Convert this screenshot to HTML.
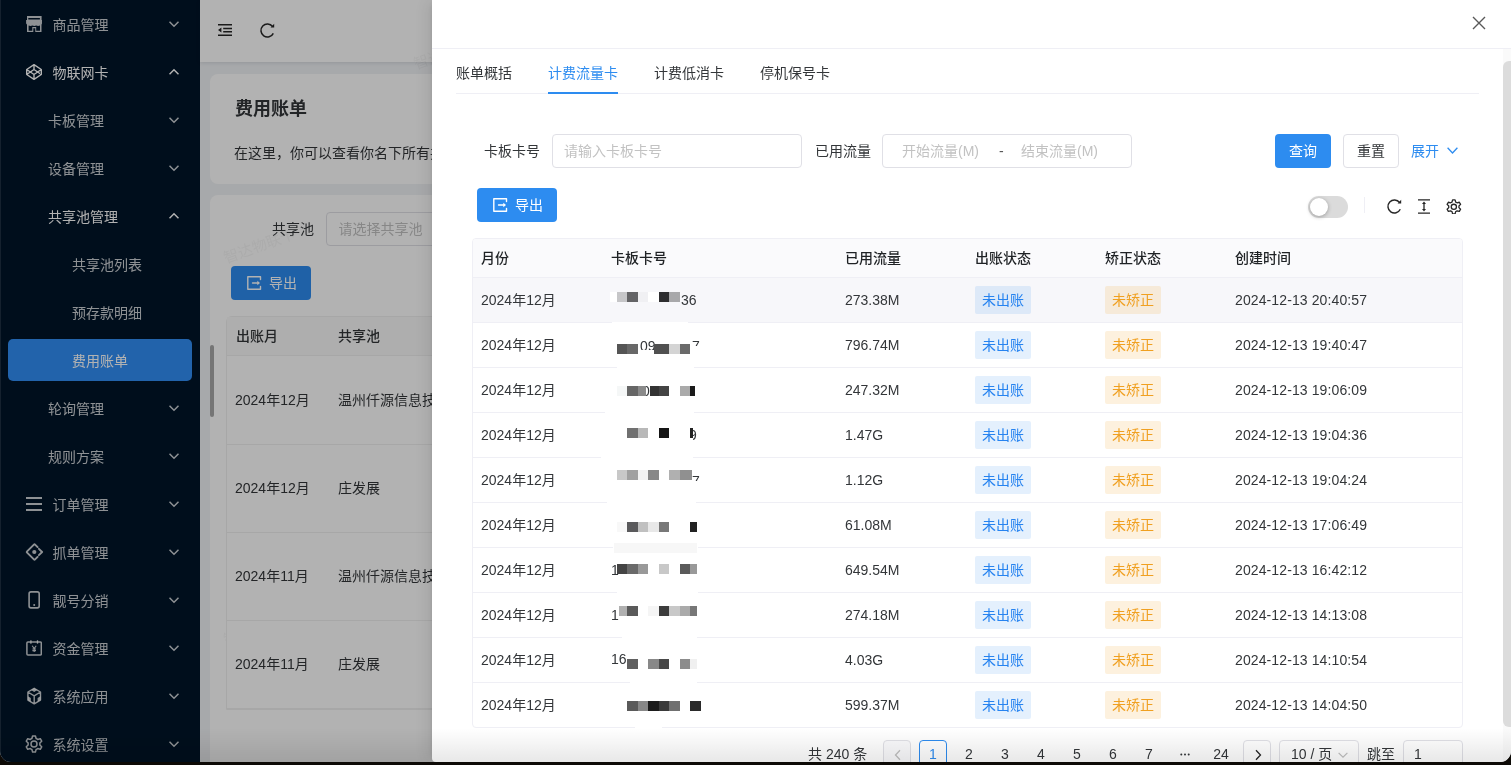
<!DOCTYPE html>
<html lang="zh-CN">
<head>
<meta charset="utf-8">
<title>费用账单</title>
<style>
*{box-sizing:border-box;margin:0;padding:0}
html,body{width:1511px;height:765px;overflow:hidden;background:#0d0a06}
body{font-family:"Liberation Sans","Noto Sans CJK SC",sans-serif;font-size:14px;color:#333639;position:relative}
.abs{position:absolute}
#win{will-change:transform;position:absolute;left:0;top:0;width:1511px;height:762px;overflow:hidden;border-radius:0 0 11px 11px;background:#f0f2f5}
/* ---------- sidebar ---------- */
#side{position:absolute;left:0;top:0;width:200px;height:762px;background:#001529}
.mi{position:absolute;left:0;width:200px;height:40px;line-height:40px;color:rgba(255,255,255,.8);font-size:14px;white-space:nowrap}
.mi .tx{position:absolute;top:1px}
.mi svg.ic{position:absolute;left:26px;top:12px;width:16px;height:16px;fill:currentColor}
.mi svg.ar{position:absolute;left:169px;top:15px;width:10px;height:10px;fill:none;stroke:currentColor;stroke-width:1.5}
.mi.sel{left:8px;width:184px;background:#318ef5;border-radius:5px;color:#fff;height:42px;line-height:42px;margin-top:-1px}
/* ---------- page behind ---------- */
#hdr{position:absolute;left:200px;top:0;width:1311px;height:62px;background:#fff;box-shadow:0 1px 4px rgba(0,21,41,.12)}
.card{position:absolute;background:#fff;border-radius:8px}
.bt{position:absolute;white-space:nowrap;line-height:20px}
/* ---------- mask & drawer ---------- */
#mask{position:absolute;left:0;top:0;width:1511px;height:762px;background:rgba(0,0,0,.3)}
#drawer{position:absolute;left:432px;top:0;width:1079px;height:762px;background:#fff;border-radius:0 0 0 4px;box-shadow:-6px 0 16px 0 rgba(0,0,0,.08),-3px 0 6px -4px rgba(0,0,0,.12)}
#drawer .t{position:absolute;white-space:nowrap;line-height:22px;height:22px}
.btn{position:absolute;height:34px;border-radius:4px;line-height:34px;text-align:center;font-size:14px;white-space:nowrap}
.btn.pr{background:#2d8cf0;color:#fff}
.btn.df{background:#fff;border:1px solid #e0e0e6;line-height:32px}
.inp{position:absolute;height:34px;border:1px solid #e0e0e6;border-radius:4px;background:#fff}
.ph{color:#c2c2c2}
.row{position:absolute;left:1px;width:989px;height:45px;border-bottom:1px solid #efeff5}
.row .c{position:absolute;top:11px;line-height:22px;white-space:nowrap}
.tag{position:absolute;top:8px;height:28px;line-height:28px;width:56px;text-align:center;border-radius:2px;font-size:14px}
.tag.b{left:502px;background:rgba(32,128,240,.12);color:#2683f0}
.tag.o{left:632px;background:rgba(240,160,32,.15);color:#f0a020}
.mz{position:absolute;height:10px}
.pg{position:absolute;top:740px;height:28px;line-height:28px;text-align:center;font-size:14px;white-space:nowrap}
</style>
</head>
<body>
<div id="win">
<div id="side">
<div class="mi" style="top:4px"><svg class="ic" viewBox="0 0 16 16"><path fill-rule="evenodd" d="M1 0h14.600v4h.4v3.200a2 2 0 0 1-.5 1.300V16H1V8.500A2 2 0 0 1 .1 7.200V4H1zM2.300 2.100h11.600v1.300H2.300zM2.600 9.500Q4.500 10.300 6.400 9.500Q8.300 10.300 10.200 9.500Q12.100 10.300 14 9.500V14.700H10.200V11H6.300V14.700H2.600zM7.300 12.200h2V16h-2z"/></svg><span class="tx" style="left:52.5px">商品管理</span><svg class="ar" viewBox="0 0 10 10"><path d="M.5 2.800L5 7.300 9.500 2.800"/></svg></div>
<div class="mi" style="top:52px;color:#fff"><svg class="ic" viewBox="0 0 16 16" style="fill:none;stroke:currentColor;stroke-width:1.4;stroke-linejoin:round"><path d="M8 .7L15.300 5.500v5L8 15.300 .7 10.500v-5zM8 .7v4.800M8 15.300v-4.800M.7 5.500L8 10.500l7.300-5M.7 10.500L8 5.500l7.300 5"/></svg><span class="tx" style="left:52.5px">物联网卡</span><svg class="ar" viewBox="0 0 10 10"><path d="M.5 7.200L5 2.700 9.500 7.200"/></svg></div>
<div class="mi" style="top:100px"><span class="tx" style="left:48px">卡板管理</span><svg class="ar" viewBox="0 0 10 10"><path d="M.5 2.800L5 7.300 9.500 2.800"/></svg></div>
<div class="mi" style="top:148px"><span class="tx" style="left:48px">设备管理</span><svg class="ar" viewBox="0 0 10 10"><path d="M.5 2.800L5 7.300 9.500 2.800"/></svg></div>
<div class="mi" style="top:196px;color:#fff"><span class="tx" style="left:48px">共享池管理</span><svg class="ar" viewBox="0 0 10 10"><path d="M.5 7.200L5 2.700 9.500 7.200"/></svg></div>
<div class="mi" style="top:244px"><span class="tx" style="left:72px">共享池列表</span></div>
<div class="mi" style="top:292px"><span class="tx" style="left:72px">预存款明细</span></div>
<div class="mi sel" style="top:340px"><span class="tx" style="left:64px">费用账单</span></div>
<div class="mi" style="top:388px"><span class="tx" style="left:48px">轮询管理</span><svg class="ar" viewBox="0 0 10 10"><path d="M.5 2.800L5 7.300 9.500 2.800"/></svg></div>
<div class="mi" style="top:436px"><span class="tx" style="left:48px">规则方案</span><svg class="ar" viewBox="0 0 10 10"><path d="M.5 2.800L5 7.300 9.500 2.800"/></svg></div>
<div class="mi" style="top:484px"><svg class="ic" viewBox="0 0 16 16"><path d="M0 1h16v2H0zM0 7h16v2H0zM0 13h16v2H0z"/></svg><span class="tx" style="left:52.5px">订单管理</span><svg class="ar" viewBox="0 0 10 10"><path d="M.5 2.800L5 7.300 9.500 2.800"/></svg></div>
<div class="mi" style="top:532px"><svg class="ic" viewBox="0 0 19 18" style="left:25px;top:11px;width:19px;height:18px;fill:none;stroke:currentColor;stroke-width:1.900;stroke-linecap:round;stroke-linejoin:round"><path d="M12.600 4.100L10.100 1.600a.85.85 0 0 0-1.200 0L2.100 8.400a.85.85 0 0 0 0 1.200l6.800 6.800a.85.85 0 0 0 1.200 0l2.500-2.500M13.900 5.800l3.200 3.200-3.200 3.200"/><circle cx="9.300" cy="9" r="2.100" fill="currentColor" stroke="none"/></svg><span class="tx" style="left:52.5px">抓单管理</span><svg class="ar" viewBox="0 0 10 10"><path d="M.5 2.800L5 7.300 9.500 2.800"/></svg></div>
<div class="mi" style="top:580px"><svg class="ic" viewBox="0 0 16 16" style="overflow:visible;fill:none;stroke:currentColor;stroke-width:1.600"><rect x="3.100" y="-.1" width="10.100" height="16" rx="1.900"/><circle cx="8.200" cy="13" r="1" fill="currentColor" stroke="none"/></svg><span class="tx" style="left:52.5px">靓号分销</span><svg class="ar" viewBox="0 0 10 10"><path d="M.5 2.800L5 7.300 9.500 2.800"/></svg></div>
<div class="mi" style="top:628px"><svg class="ic" viewBox="0 0 16 16" style="fill:none;stroke:currentColor;stroke-width:1.500"><rect x=".9" y="2" width="14.400" height="13" rx="1"/><path d="M4.900 .2v3.600M11.500 .2v3.600" stroke-width="1.300"/><path d="M6.200 5.800L8.200 8.600l2-2.800M8.200 8.600v3.400M6.400 9h3.600M6.400 10.600h3.600" stroke-width="1.100"/></svg><span class="tx" style="left:52.5px">资金管理</span><svg class="ar" viewBox="0 0 10 10"><path d="M.5 2.800L5 7.300 9.500 2.800"/></svg></div>
<div class="mi" style="top:676px"><svg class="ic" viewBox="0 0 16 16" style="overflow:visible;fill:none;stroke:currentColor;stroke-width:1.400;stroke-linejoin:round"><path d="M8.200 .3L14.500 4v8.100L8.200 15.900 1.900 12.100V4zM1.900 4L8.200 7.900l6.300-3.900M8.200 7.900v8"/><path d="M8.200 .3l3 1.800-3 1.800-3-1.800zM1.900 8.300v3.800l2.900 1.700v-3.800zM14.500 8.300v3.800l-2.900 1.700v-3.800z" fill="currentColor" stroke="none"/></svg><span class="tx" style="left:52.5px">系统应用</span><svg class="ar" viewBox="0 0 10 10"><path d="M.5 2.800L5 7.300 9.500 2.800"/></svg></div>
<div class="mi" style="top:724px"><svg class="ic" viewBox="0 0 18 18" style="left:25.200px;top:11px;width:18px;height:18px;fill:none;stroke:currentColor;stroke-width:1.500;stroke-linejoin:round"><path d="M11.11 3.49L10.42 0.92L7.58 0.92L6.89 3.49A5.9 5.9 0 0 0 5.29 4.41L2.72 3.73L1.29 6.20L3.17 8.08A5.9 5.9 0 0 0 3.17 9.92L1.29 11.80L2.72 14.27L5.29 13.59A5.9 5.9 0 0 0 6.89 14.51L7.58 17.08L10.42 17.08L11.11 14.51A5.9 5.9 0 0 0 12.71 13.59L15.28 14.27L16.71 11.80L14.83 9.92A5.9 5.9 0 0 0 14.83 8.08L16.71 6.20L15.28 3.73L12.71 4.41A5.9 5.9 0 0 0 11.11 3.49z"/><circle cx="9" cy="9" r="3"/></svg><span class="tx" style="left:52.5px">系统设置</span><svg class="ar" viewBox="0 0 10 10"><path d="M.5 2.800L5 7.300 9.500 2.800"/></svg></div>
</div>
<div id="hdr"></div>
<svg class="abs" style="left:217px;top:23px;width:16px;height:14px" viewBox="0 0 16 14" fill="#262626"><path d="M1 1h14v1.500H1zM6.200 4.800H15v1.400H6.200zM6.200 8H15v1.400H6.200zM1 11.500h14V13H1zM1 7.100l3.400-2.500v5z"/></svg>
<svg class="abs" style="left:259px;top:22px;width:17px;height:17px" viewBox="0 0 17 17" fill="none" stroke="#262626" stroke-width="1.500"><path d="M14.300 11.300A6.500 6.500 0 1 1 13.600 4.500"/><path d="M15.200 1.800v3.600h-3.600z" fill="#262626" stroke="none"/></svg>
<div class="card" style="left:210px;top:74px;width:1291px;height:110px"></div>
<div class="bt" style="left:235px;top:96px;font-size:18px;font-weight:700;line-height:26px">费用账单</div>
<div class="bt" style="left:234px;top:143px">在这里，你可以查看你名下所有共享池的费用账单</div>
<div class="card" style="left:210px;top:195px;width:1291px;height:600px"></div>
<div class="bt" style="left:222px;top:236px;color:rgba(0,0,0,.04);font-size:15px;transform:rotate(-20deg)">智达物联卡</div>
<div class="bt" style="left:222px;top:618px;color:rgba(0,0,0,.04);font-size:15px;transform:rotate(-20deg)">智达物联卡</div>
<div class="bt" style="left:412px;top:42px;color:rgba(0,0,0,.04);font-size:15px;transform:rotate(-20deg)">智达物联卡</div>
<div class="bt" style="left:418px;top:434px;color:rgba(0,0,0,.04);font-size:15px;transform:rotate(-20deg)">智达物联卡</div>
<div class="bt" style="left:272px;top:219px">共享池</div>
<div class="inp" style="left:326px;top:212px;width:250px"><span class="bt ph" style="left:11.400px;top:6px">请选择共享池</span></div>
<div class="btn pr" style="left:231px;top:266px;width:80px"><svg style="position:absolute;left:16px;top:10px;width:15px;height:14px" viewBox="0 0 15 14" fill="none" stroke="#fff" stroke-width="1.400" stroke-linejoin="round" stroke-linecap="round"><path d="M13.500 3.500V.8H.8v12.400h12.700v-2.700"/><path d="M5.500 7h5.800" /><path d="M10.300 4.800L13 7l-2.700 2.200z" fill="#fff" stroke="none"/></svg><span style="position:absolute;left:38px;top:0">导出</span></div>
<div class="abs" style="left:226px;top:316px;width:1260px;height:394px;border:1px solid #f0f0f0;border-radius:6px 6px 0 0;background:#fff"></div>
<div class="abs" style="left:227px;top:317px;width:1258px;height:39px;background:#fafafa;border-bottom:1px solid #f0f0f0"></div>
<div class="bt" style="left:236px;top:326px;font-weight:500">出账月</div>
<div class="bt" style="left:338px;top:326px;font-weight:500">共享池</div>
<div class="abs" style="left:227px;top:444px;width:1258px;height:1px;background:#f0f0f0"></div>
<div class="bt" style="left:235px;top:390px">2024年12月</div>
<div class="bt" style="left:338px;top:390px">温州仟源信息技术有限公司</div>
<div class="abs" style="left:227px;top:532px;width:1258px;height:1px;background:#f0f0f0"></div>
<div class="bt" style="left:235px;top:478px">2024年12月</div>
<div class="bt" style="left:338px;top:478px">庄发展</div>
<div class="abs" style="left:227px;top:620px;width:1258px;height:1px;background:#f0f0f0"></div>
<div class="bt" style="left:235px;top:566px">2024年11月</div>
<div class="bt" style="left:338px;top:566px">温州仟源信息技术有限公司</div>
<div class="abs" style="left:227px;top:708px;width:1258px;height:1px;background:#f0f0f0"></div>
<div class="bt" style="left:235px;top:654px">2024年11月</div>
<div class="bt" style="left:338px;top:654px">庄发展</div>
<div class="abs" style="left:210px;top:345px;width:4px;height:72px;border-radius:2px;background:#a8a8a8"></div>
<div class="abs" style="left:0;top:0;width:1px;height:762px;background:rgba(255,255,255,.12)"></div>
<div id="mask"></div>
<div id="drawer">
<div class="abs" style="left:0;top:48px;width:1079px;height:1px;background:#efeff5"></div>
<svg class="abs" style="left:1040px;top:16px;width:14px;height:14px" viewBox="0 0 14 14" stroke="#595959" stroke-width="1.400" fill="none"><path d="M1 1l12 12M13 1L1 13"/></svg>
<div class="abs" style="left:1071px;top:49px;width:8px;height:713px;background:#fafafa"></div>
<div class="abs" style="left:1071px;top:61px;width:14px;height:666px;border-radius:6px;background:#dcdcdc"></div>
<div class="t" style="left:24px;top:62px;">账单概括</div>
<div class="t" style="left:116px;top:62px;color:#2d8cf0">计费流量卡</div>
<div class="t" style="left:222px;top:62px;">计费低消卡</div>
<div class="t" style="left:328px;top:62px;">停机保号卡</div>
<div class="abs" style="left:24px;top:93px;width:1023px;height:1px;background:#efeff5"></div>
<div class="abs" style="left:116px;top:92px;width:70px;height:2px;background:#2d8cf0"></div>
<div class="t" style="left:52px;top:140px">卡板卡号</div>
<div class="inp" style="left:120px;top:134px;width:250px"><span class="t ph" style="left:11px;top:5px">请输入卡板卡号</span></div>
<div class="t" style="left:383px;top:140px">已用流量</div>
<div class="inp" style="left:450px;top:134px;width:250px"><span class="t ph" style="left:19px;top:5px">开始流量(M)</span><span class="t ph" style="left:116px;top:5px;color:#595959">-</span><span class="t ph" style="left:138px;top:5px">结束流量(M)</span></div>
<div class="btn pr" style="left:843px;top:134px;width:56px">查询</div>
<div class="btn df" style="left:911px;top:134px;width:56px">重置</div>
<div class="t" style="left:979px;top:140px;color:#2d8cf0">展开</div>
<svg class="abs" style="left:1015px;top:145px;width:11px;height:11px" viewBox="0 0 11 11" fill="none" stroke="#2d8cf0" stroke-width="1.300"><path d="M.6 2.800L5.500 8 10.400 2.800"/></svg>
<div class="btn pr" style="left:45px;top:188px;width:80px"><svg style="position:absolute;left:16px;top:10px;width:15px;height:14px" viewBox="0 0 15 14" fill="none" stroke="#fff" stroke-width="1.400" stroke-linejoin="round" stroke-linecap="round"><path d="M13.500 3.500V.8H.8v12.400h12.700v-2.700"/><path d="M5.500 7h5.800"/><path d="M10.300 4.800L13 7l-2.700 2.200z" fill="#fff" stroke="none"/></svg><span style="position:absolute;left:38px;top:0">导出</span></div>
<div class="abs" style="left:876px;top:196px;width:40px;height:22px;border-radius:11px;background:#dbdbdb"><div class="abs" style="left:2px;top:2px;width:18px;height:18px;border-radius:9px;background:#fff;box-shadow:0 1px 4px rgba(0,0,0,.3)"></div></div>
<div class="abs" style="left:932px;top:197px;width:1px;height:16px;background:#efeff5"></div>
<svg class="abs" style="left:953.600px;top:198px;width:17px;height:17px" viewBox="0 0 17 17" fill="none" stroke="#262626" stroke-width="1.400"><path d="M14.300 11.300A6.500 6.500 0 1 1 13.600 4.500"/><path d="M15.200 1.800v3.600h-3.600z" fill="#262626" stroke="none"/></svg>
<svg class="abs" style="left:986px;top:199px;width:12px;height:15px" viewBox="0 0 12 15" fill="none" stroke="#262626" stroke-width="1.300"><path d="M0 .8h12M0 14.200h12M6 4v7"/><path d="M6 2.600l2 2.400H4zM6 12.400l2-2.400H4z" fill="#262626" stroke="none"/></svg>
<svg class="abs" style="left:1013.850px;top:198.650px;width:15.700px;height:15.700px" viewBox="0 0 18 18" fill="none" stroke="#262626" stroke-width="1.500" stroke-linejoin="round"><path d="M11.11 3.49L10.42 0.92L7.58 0.92L6.89 3.49A5.9 5.9 0 0 0 5.29 4.41L2.72 3.73L1.29 6.20L3.17 8.08A5.9 5.9 0 0 0 3.17 9.92L1.29 11.80L2.72 14.27L5.29 13.59A5.9 5.9 0 0 0 6.89 14.51L7.58 17.08L10.42 17.08L11.11 14.51A5.9 5.9 0 0 0 12.71 13.59L15.28 14.27L16.71 11.80L14.83 9.92A5.9 5.9 0 0 0 14.83 8.08L16.71 6.20L15.28 3.73L12.71 4.41A5.9 5.9 0 0 0 11.11 3.49z"/><circle cx="9" cy="9" r="3"/></svg>
<div class="abs" id="tb" style="left:40px;top:238px;width:991px;height:490px;border:1px solid #efeff5;border-radius:4px;overflow:hidden;background:#fff">
<div class="abs" style="left:0;top:0;width:989px;height:39px;background:#fafafc;color:#1f2225;border-bottom:1px solid #efeff5;font-weight:500">
<span class="t" style="left:8px;top:8px">月份</span>
<span class="t" style="left:138px;top:8px">卡板卡号</span>
<span class="t" style="left:372px;top:8px">已用流量</span>
<span class="t" style="left:502px;top:8px">出账状态</span>
<span class="t" style="left:632px;top:8px">矫正状态</span>
<span class="t" style="left:762px;top:8px">创建时间</span>
</div>
<div class="row" style="left:0;top:39px;background:#f7f7fa"><span class="c" style="left:8px">2024年12月</span><span class="c" style="left:372px">273.38M</span><span class="tag b">未出账</span><span class="tag o">未矫正</span><span class="c" style="left:762px;letter-spacing:.11px">2024-12-13 20:40:57</span></div>
<div class="row" style="left:0;top:84px"><span class="c" style="left:8px">2024年12月</span><span class="c" style="left:372px">796.74M</span><span class="tag b">未出账</span><span class="tag o">未矫正</span><span class="c" style="left:762px;letter-spacing:.11px">2024-12-13 19:40:47</span></div>
<div class="row" style="left:0;top:129px"><span class="c" style="left:8px">2024年12月</span><span class="c" style="left:372px">247.32M</span><span class="tag b">未出账</span><span class="tag o">未矫正</span><span class="c" style="left:762px;letter-spacing:.11px">2024-12-13 19:06:09</span></div>
<div class="row" style="left:0;top:174px"><span class="c" style="left:8px">2024年12月</span><span class="c" style="left:372px">1.47G</span><span class="tag b">未出账</span><span class="tag o">未矫正</span><span class="c" style="left:762px;letter-spacing:.11px">2024-12-13 19:04:36</span></div>
<div class="row" style="left:0;top:219px"><span class="c" style="left:8px">2024年12月</span><span class="c" style="left:372px">1.12G</span><span class="tag b">未出账</span><span class="tag o">未矫正</span><span class="c" style="left:762px;letter-spacing:.11px">2024-12-13 19:04:24</span></div>
<div class="row" style="left:0;top:264px"><span class="c" style="left:8px">2024年12月</span><span class="c" style="left:372px">61.08M</span><span class="tag b">未出账</span><span class="tag o">未矫正</span><span class="c" style="left:762px;letter-spacing:.11px">2024-12-13 17:06:49</span></div>
<div class="row" style="left:0;top:309px"><span class="c" style="left:8px">2024年12月</span><span class="c" style="left:372px">649.54M</span><span class="tag b">未出账</span><span class="tag o">未矫正</span><span class="c" style="left:762px;letter-spacing:.11px">2024-12-13 16:42:12</span></div>
<div class="row" style="left:0;top:354px"><span class="c" style="left:8px">2024年12月</span><span class="c" style="left:372px">274.18M</span><span class="tag b">未出账</span><span class="tag o">未矫正</span><span class="c" style="left:762px;letter-spacing:.11px">2024-12-13 14:13:08</span></div>
<div class="row" style="left:0;top:399px"><span class="c" style="left:8px">2024年12月</span><span class="c" style="left:372px">4.03G</span><span class="tag b">未出账</span><span class="tag o">未矫正</span><span class="c" style="left:762px;letter-spacing:.11px">2024-12-13 14:10:54</span></div>
<div class="row" style="left:0;top:444px;border-bottom:none"><span class="c" style="left:8px">2024年12月</span><span class="c" style="left:372px">599.37M</span><span class="tag b">未出账</span><span class="tag o">未矫正</span><span class="c" style="left:762px;letter-spacing:.11px">2024-12-13 14:04:50</span></div>
</div>
<div class="mz" style="left:180px;top:322px;width:76px;height:2px;background:#fff"></div>
<div class="mz" style="left:185px;top:367px;width:77px;height:2px;background:#fff"></div>
<div class="mz" style="left:173px;top:412px;width:89px;height:2px;background:#fff"></div>
<div class="mz" style="left:169px;top:457px;width:92px;height:2px;background:#fff"></div>
<div class="mz" style="left:175px;top:502px;width:89px;height:2px;background:#fff"></div>
<div class="mz" style="left:181px;top:547px;width:85px;height:2px;background:#fff"></div>
<div class="mz" style="left:185px;top:592px;width:81px;height:2px;background:#fff"></div>
<div class="mz" style="left:190px;top:637px;width:75px;height:2px;background:#fff"></div>
<div class="mz" style="left:198px;top:682px;width:67px;height:2px;background:#fff"></div>
<div class="mz" style="left:203px;top:727px;width:27px;height:2px;background:#fff"></div>
<div class="mz" style="left:182px;top:543px;width:83px;height:10px;background:#f7f7f7"></div>
<div class="abs" style="left:249px;top:289px;width:30px;height:22px;overflow:hidden"><span class="t" style="left:0px;top:0px">36</span></div>
<div class="abs" style="left:208px;top:335px;width:30px;height:15px;overflow:hidden"><span class="t" style="left:0px;top:0px">09</span></div>
<div class="abs" style="left:260px;top:335px;width:12px;height:11px;overflow:hidden"><span class="t" style="left:0px;top:0px">7</span></div>
<div class="abs" style="left:260px;top:470px;width:12px;height:11px;overflow:hidden"><span class="t" style="left:0px;top:0px">7</span></div>
<div class="abs" style="left:179px;top:559px;width:12px;height:22px;overflow:hidden"><span class="t" style="left:0px;top:0px">1</span></div>
<div class="abs" style="left:179px;top:604px;width:12px;height:22px;overflow:hidden"><span class="t" style="left:0px;top:0px">1</span></div>
<div class="abs" style="left:179px;top:648px;width:30px;height:22px;overflow:hidden"><span class="t" style="left:0px;top:0px">16</span></div>
<div class="abs" style="left:214px;top:380px;width:4px;height:22px;overflow:hidden"><span class="t" style="left:-4px;top:0px">0</span></div>
<div class="abs" style="left:261px;top:424px;width:5px;height:22px;overflow:hidden"><span class="t" style="left:-4px;top:0px">9</span></div>
<div class="mz" style="left:178px;top:292px;width:7px;background:#fff"></div>
<div class="mz" style="left:185px;top:292px;width:10px;background:#c6c6c8"></div>
<div class="mz" style="left:195px;top:292px;width:11px;background:#646466"></div>
<div class="mz" style="left:206px;top:292px;width:10px;background:#f0f0f3"></div>
<div class="mz" style="left:216px;top:292px;width:11px;background:#fff"></div>
<div class="mz" style="left:227px;top:292px;width:10px;background:#2e2e30"></div>
<div class="mz" style="left:237px;top:292px;width:11px;background:#a8a8aa"></div>
<div class="mz" style="left:185px;top:344px;width:10px;background:#555"></div>
<div class="mz" style="left:195px;top:344px;width:11px;background:#686868"></div>
<div class="mz" style="left:222px;top:344px;width:15px;background:#505050"></div>
<div class="mz" style="left:237px;top:344px;width:11px;background:#d4d4d4"></div>
<div class="mz" style="left:248px;top:344px;width:10px;background:#6a6a6a"></div>
<div class="mz" style="left:185px;top:386px;width:10px;background:#f5f7f7"></div>
<div class="mz" style="left:195px;top:386px;width:11px;background:#666"></div>
<div class="mz" style="left:206px;top:386px;width:8px;background:#8a8a8a"></div>
<div class="mz" style="left:218px;top:386px;width:9px;background:#333"></div>
<div class="mz" style="left:227px;top:386px;width:10px;background:#444"></div>
<div class="mz" style="left:248px;top:386px;width:10px;background:#aaa"></div>
<div class="mz" style="left:258px;top:386px;width:5px;background:#1a1a1a"></div>
<div class="mz" style="left:195px;top:428px;width:11px;background:#707070"></div>
<div class="mz" style="left:206px;top:428px;width:10px;background:#b8b8b8"></div>
<div class="mz" style="left:227px;top:428px;width:10px;background:#151515"></div>
<div class="mz" style="left:258px;top:428px;width:3px;background:#222"></div>
<div class="mz" style="left:185px;top:470px;width:10px;background:#c8c8c8"></div>
<div class="mz" style="left:195px;top:470px;width:11px;background:#a0a0a0"></div>
<div class="mz" style="left:206px;top:470px;width:10px;background:#f2f2f2"></div>
<div class="mz" style="left:216px;top:470px;width:11px;background:#888"></div>
<div class="mz" style="left:237px;top:470px;width:11px;background:#b0b0b0"></div>
<div class="mz" style="left:248px;top:470px;width:12px;background:#909090"></div>
<div class="mz" style="left:185px;top:522px;width:10px;background:#f8f8f8"></div>
<div class="mz" style="left:195px;top:522px;width:11px;background:#5a5a5c"></div>
<div class="mz" style="left:206px;top:522px;width:10px;background:#c0c0c0"></div>
<div class="mz" style="left:216px;top:522px;width:11px;background:#e8e8e8"></div>
<div class="mz" style="left:227px;top:522px;width:10px;background:#787878"></div>
<div class="mz" style="left:258px;top:522px;width:7px;background:#222"></div>
<div class="mz" style="left:185px;top:564px;width:10px;background:#444"></div>
<div class="mz" style="left:195px;top:564px;width:11px;background:#6a6a6a"></div>
<div class="mz" style="left:206px;top:564px;width:10px;background:#999"></div>
<div class="mz" style="left:227px;top:564px;width:10px;background:#c8c8c8"></div>
<div class="mz" style="left:248px;top:564px;width:10px;background:#5a5a5a"></div>
<div class="mz" style="left:258px;top:564px;width:7px;background:#999"></div>
<div class="mz" style="left:187px;top:606px;width:8px;background:#b0b0b0"></div>
<div class="mz" style="left:195px;top:606px;width:11px;background:#5a5a5a"></div>
<div class="mz" style="left:216px;top:606px;width:11px;background:#f5f5f5"></div>
<div class="mz" style="left:227px;top:606px;width:10px;background:#3c3c3c"></div>
<div class="mz" style="left:237px;top:606px;width:11px;background:#c8c8c8"></div>
<div class="mz" style="left:248px;top:606px;width:10px;background:#aaa"></div>
<div class="mz" style="left:258px;top:606px;width:7px;background:#777"></div>
<div class="mz" style="left:195px;top:659px;width:11px;background:#606060"></div>
<div class="mz" style="left:216px;top:659px;width:11px;background:#888"></div>
<div class="mz" style="left:227px;top:659px;width:10px;background:#484848"></div>
<div class="mz" style="left:248px;top:659px;width:10px;background:#8c8c8c"></div>
<div class="mz" style="left:258px;top:659px;width:7px;background:#f0f0f0"></div>
<div class="mz" style="left:195px;top:701px;width:11px;background:#5a5a5a"></div>
<div class="mz" style="left:206px;top:701px;width:10px;background:#888"></div>
<div class="mz" style="left:216px;top:701px;width:11px;background:#1c1c1c"></div>
<div class="mz" style="left:227px;top:701px;width:10px;background:#3a3a3a"></div>
<div class="mz" style="left:237px;top:701px;width:11px;background:#707070"></div>
<div class="mz" style="left:258px;top:701px;width:11px;background:#2a2a2a"></div>
<div class="pg" style="left:376px;width:60px;text-align:left">共 240 条</div>
<div class="pg" style="left:451px;width:28px;border:1px solid #e0e0e6;border-radius:4px;background:#fafafc"><svg style="position:absolute;left:9px;top:8px;width:10px;height:12px" viewBox="0 0 10 12" fill="none" stroke="#bfbfbf" stroke-width="1.300"><path d="M7 1.200L2.500 6 7 10.800"/></svg></div>
<div class="pg" style="left:487px;width:28px;border:1px solid #2d8cf0;border-radius:4px;color:#2d8cf0;line-height:26px">1</div>
<div class="pg" style="left:523px;width:28px;">2</div>
<div class="pg" style="left:559px;width:28px;">3</div>
<div class="pg" style="left:595px;width:28px;">4</div>
<div class="pg" style="left:631px;width:28px;">5</div>
<div class="pg" style="left:667px;width:28px;">6</div>
<div class="pg" style="left:703px;width:28px;">7</div>
<div class="pg" style="left:739px;width:28px;"><svg style="position:absolute;left:8px;top:12.500px;width:12px;height:3px" viewBox="0 0 12 3" fill="#333639"><circle cx="2.300" cy="1.500" r="1"/><circle cx="6" cy="1.500" r="1"/><circle cx="9.700" cy="1.500" r="1"/></svg></div>
<div class="pg" style="left:775px;width:28px;">24</div>
<div class="pg" style="left:811px;width:28px;border:1px solid #e0e0e6;border-radius:4px"><svg style="position:absolute;left:9px;top:8px;width:10px;height:12px" viewBox="0 0 10 12" fill="none" stroke="#262626" stroke-width="1.300"><path d="M3 1.200L7.500 6 3 10.800"/></svg></div>
<div class="pg" style="left:847px;width:80px;border:1px solid #e0e0e6;border-radius:4px;text-align:left"><span style="position:absolute;left:11px;top:-1px">10 / 页</span><svg style="position:absolute;left:58px;top:9px;width:10px;height:10px" viewBox="0 0 10 10" fill="none" stroke="#bfbfbf" stroke-width="1.200"><path d="M.6 2.800L5 7.200 9.400 2.800"/></svg></div>
<div class="pg" style="left:935px;width:28px;text-align:left">跳至</div>
<div class="pg" style="left:971px;width:60px;border:1px solid #e0e0e6;border-radius:4px;text-align:left"><span style="position:absolute;left:10px;top:-1px">1</span></div>
</div>
<div class="abs" style="left:0;top:728px;width:1511px;height:34px;background:linear-gradient(to bottom,rgba(0,0,0,0),rgba(0,0,0,.09))"></div>
</div>
</body>
</html>
